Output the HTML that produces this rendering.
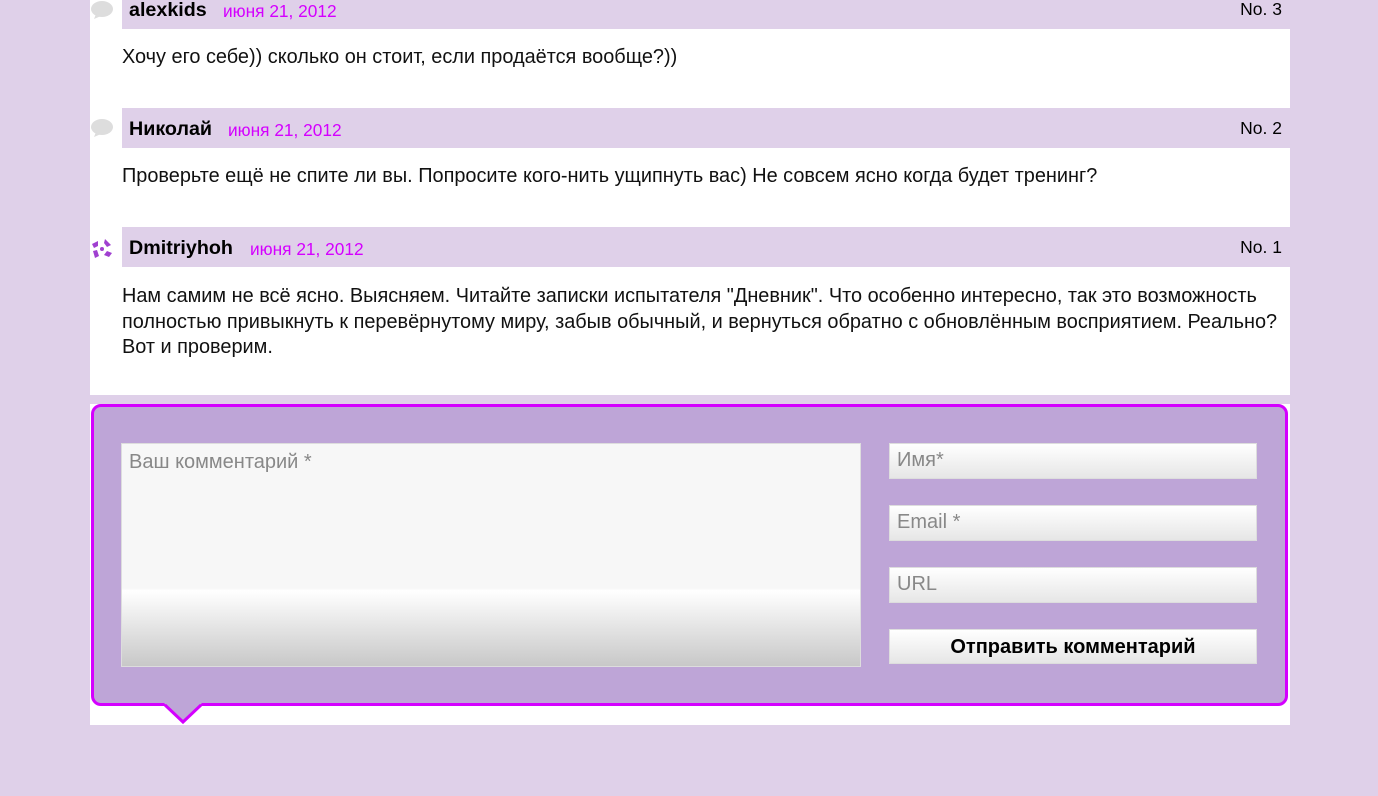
<!DOCTYPE html>
<html><head><meta charset="utf-8"><style>
*{box-sizing:border-box;margin:0;padding:0}
body{width:1378px;height:796px;background:#dfd0e9;font-family:"Liberation Sans",Arial,sans-serif;position:relative;overflow:hidden}
.col{position:absolute;left:90px;width:1200px;background:#fff}
.hd{position:absolute;left:122px;width:1168px;height:40px;background:#dfd0e9;font-size:19.7px}
.hd b{position:absolute;left:7px;top:10px;color:#000}
.hd .d{position:absolute;top:12px;font-size:17.3px;color:#d400ff}
.hd .n{position:absolute;right:8px;top:10px;font-size:17.5px;color:#000}
.tx{position:absolute;left:122px;font-size:19.9px;line-height:25.5px;color:#111;width:1166px}
.bub{position:absolute;left:91px;width:22px;height:18px}
.form{position:absolute;left:91px;top:404px;width:1197px;height:302px;background:#bea5d7;border:3px solid #d400ff;border-radius:10px}
.inp{position:absolute;background:linear-gradient(#fff,#e6e6e6);border:1px solid #ddd;font-size:20px;color:#888;padding:6px 7px}
</style></head><body>
<div class="col" style="top:0;height:395px"></div>
<div class="col" style="top:404px;height:321px"></div>

<svg class="bub" style="top:1px" viewBox="0 0 22 18"><ellipse cx="11" cy="8" rx="11" ry="8" fill="#ddd"/><path d="M5 13 L3 18 L10 15Z" fill="#ddd"/></svg>
<div class="hd" style="top:-11px"><b>alexkids</b><span class="d" style="left:101px">июня 21, 2012</span><span class="n">No. 3</span></div>
<div class="tx" style="top:45px">Хочу его себе)) сколько он стоит, если продаётся вообще?))</div>

<svg class="bub" style="top:119px" viewBox="0 0 22 18"><ellipse cx="11" cy="8" rx="11" ry="8" fill="#ddd"/><path d="M5 13 L3 18 L10 15Z" fill="#ddd"/></svg>
<div class="hd" style="top:108px"><b>Николай</b><span class="d" style="left:106px">июня 21, 2012</span><span class="n">No. 2</span></div>
<div class="tx" style="top:164px">Проверьте ещё не спите ли вы. Попросите кого-нить ущипнуть вас) Не совсем ясно когда будет тренинг?</div>

<svg style="position:absolute;left:89px;top:236px" width="26" height="26" viewBox="0 0 26 26"><g fill="#a040d0"><path d="M3 8 L9 5 L9 10 L5 12Z"/><path d="M16 3 L22 9 L18 11 L15 7Z"/><path d="M4 15 L8 14 L10 20 L6 22Z"/><path d="M18 15 L23 17 L20 21 L15 19Z"/><circle cx="13" cy="13" r="2"/></g></svg>
<div class="hd" style="top:227px"><b>Dmitriyhoh</b><span class="d" style="left:128px">июня 21, 2012</span><span class="n">No. 1</span></div>
<div class="tx" style="top:284px">Нам самим не всё ясно. Выясняем. Читайте записки испытателя "Дневник". Что особенно интересно, так это возможность полностью привыкнуть к перевёрнутому миру, забыв обычный, и вернуться обратно с обновлённым восприятием. Реально? Вот и проверим.</div>

<div class="form"></div>
<svg style="position:absolute;left:164px;top:703px" width="38" height="22" viewBox="0 0 38 22"><path d="M0 0 L19 18 L38 0Z" fill="#bea5d7"/><path d="M1 2 L19 19 L37 2" fill="none" stroke="#d400ff" stroke-width="3"/></svg>
<div class="inp" style="left:121px;top:443px;width:740px;height:224px;background:linear-gradient(#f7f7f7 0,#f7f7f7 65%,#fff 66%,#c8c8c8 100%);padding:7px 7px">Ваш комментарий *</div>
<div class="inp" style="left:889px;top:443px;width:368px;height:36px;padding-top:5px">Имя*</div>
<div class="inp" style="left:889px;top:505px;width:368px;height:36px;padding-top:5px">Email *</div>
<div class="inp" style="left:889px;top:567px;width:368px;height:36px;padding-top:5px">URL</div>
<div class="inp" style="left:889px;top:629px;width:368px;height:35px;text-align:center;color:#000;font-weight:bold;font-size:20px;padding-top:6px">Отправить комментарий</div>
</body></html>
